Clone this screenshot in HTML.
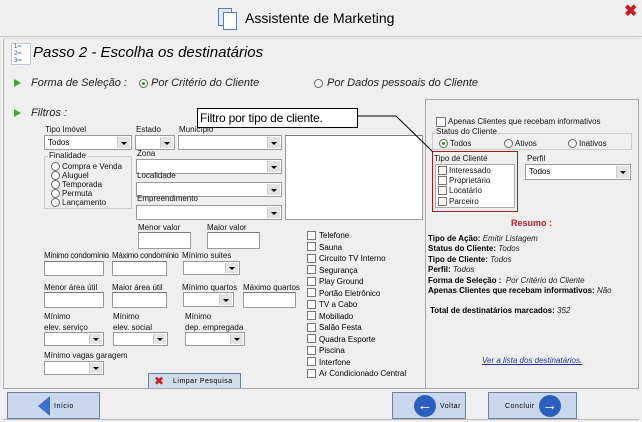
<!DOCTYPE html>
<html><head><meta charset="utf-8"><style>
*{box-sizing:border-box;margin:0;padding:0}
body{width:642px;height:422px;background:#efefef;font-family:"Liberation Sans",sans-serif;position:relative;overflow:hidden;color:#000}
.a{position:absolute;white-space:nowrap}
.l{position:absolute;font-size:8px;white-space:nowrap;color:#111}
.in{position:absolute;background:#fff;border:1px solid #9a9a9a;border-top-color:#7a7a7a}
.sel{position:absolute;background:#fff;border:1px solid #9a9a9a;font-size:8px;padding:2px 3px}
.sel:after{content:"";position:absolute;right:1px;top:1px;bottom:1px;width:12px;background:#e4e4e4;border-left:1px solid #ccc}
.sel b{position:absolute;right:4px;top:50%;margin-top:-1px;border:3px solid transparent;border-top:3px solid #000;z-index:2}
.cb{position:absolute;width:9px;height:9px;border:1px solid #777;background:#fff}
.rd{position:absolute;width:9px;height:9px;border:1px solid #666;border-radius:50%;background:#fff}
.btn{position:absolute;background:#c9d8ec;border:1px solid #6d7f99;font-size:7px;letter-spacing:0.5px;white-space:nowrap}
.arrow{position:absolute;width:0;height:0;border-left:7px solid #3faa2f;border-top:4px solid transparent;border-bottom:4px solid transparent}
.r{font-size:8px;position:absolute;white-space:nowrap}
.r b{font-weight:bold}
.r i{font-style:italic;color:#222}
</style></head><body>
<div class="a" style="left:218px;top:8px;width:14px;height:18px;border:1px solid #5a7ab0;background:#dfe9f7"></div>
<div class="a" style="left:223px;top:12px;width:14px;height:18px;border:1px solid #5a7ab0;background:#fff"></div>
<div class="a" style="left:245px;top:10px;font-size:14px">Assistente de Marketing</div>
<div class="a" style="left:624px;top:1px;font-size:16px;font-weight:bold;color:#c02020">✖</div>
<div class="a" style="left:0;top:36px;width:642px;height:1px;background:#c8c8c8"></div>
<div class="a" style="left:3px;top:38px;width:1px;height:350px;background:#bbb"></div>
<div class="a" style="left:3px;top:38px;width:636px;height:1px;background:#ddd"></div>
<div class="a" style="left:11px;top:43px;width:20px;height:22px;font-size:6px;line-height:7px;color:#2050a0;border:1px solid #c0c8d8;background:#fff;padding-left:2px">1═<br>2═<br>3═</div>
<div class="a" style="left:33px;top:44px;font-size:15px;font-style:italic">Passo 2 - Escolha os destinatários</div>
<div class="arrow" style="left:14px;top:79px"></div>
<div class="a" style="left:31px;top:77px;font-size:11px;font-style:italic;color:#222">Forma de Seleção :</div>
<div class="rd" style="left:139px;top:79px"></div><div class="a" style="left:142px;top:82px;width:3px;height:3px;border-radius:50%;background:#3a8a2a"></div>
<div class="a" style="left:151px;top:77px;font-size:11px;font-style:italic;color:#222">Por Critério do Cliente</div>
<div class="rd" style="left:314px;top:79px"></div>
<div class="a" style="left:327px;top:77px;font-size:11px;font-style:italic;color:#222">Por Dados pessoais do Cliente</div>
<div class="arrow" style="left:14px;top:109px"></div>
<div class="a" style="left:31px;top:107px;font-size:11px;font-style:italic;color:#222">Filtros :</div>
<div class="l" style="left:45px;top:125px">Tipo Imóvel</div>
<div class="sel" style="left:44px;top:135px;width:88px;height:15px">Todos<b></b></div>
<div class="l" style="left:136px;top:125px">Estado</div>
<div class="sel" style="left:135px;top:135px;width:40px;height:15px"><b></b></div>
<div class="l" style="left:179px;top:125px">Município</div>
<div class="sel" style="left:178px;top:135px;width:104px;height:15px"><b></b></div>
<div class="in" style="left:285px;top:135px;width:138px;height:85px"></div>
<div class="a" style="left:44px;top:156px;width:88px;height:53px;border:1px solid #ccc"></div>
<div class="l" style="left:48px;top:151px;background:#efefef;padding:0 1px">Finalidade</div>
<div class="rd" style="left:51px;top:162px"></div><div class="l" style="left:62px;top:162px">Compra e Venda</div>
<div class="rd" style="left:51px;top:171px"></div><div class="l" style="left:62px;top:171px">Aluguel</div>
<div class="rd" style="left:51px;top:180px"></div><div class="l" style="left:62px;top:180px">Temporada</div>
<div class="rd" style="left:51px;top:189px"></div><div class="l" style="left:62px;top:189px">Permuta</div>
<div class="rd" style="left:51px;top:198px"></div><div class="l" style="left:62px;top:198px">Lançamento</div>
<div class="l" style="left:137px;top:149px">Zona</div>
<div class="sel" style="left:136px;top:159px;width:146px;height:15px"><b></b></div>
<div class="l" style="left:137px;top:171px">Localidade</div>
<div class="sel" style="left:136px;top:182px;width:146px;height:15px"><b></b></div>
<div class="l" style="left:137px;top:194px">Empreendimento</div>
<div class="sel" style="left:136px;top:205px;width:146px;height:15px"><b></b></div>
<div class="l" style="left:138px;top:223px">Menor valor</div><div class="in" style="left:138px;top:232px;width:53px;height:17px"></div>
<div class="l" style="left:207px;top:223px">Maior valor</div><div class="in" style="left:207px;top:232px;width:53px;height:17px"></div>
<div class="l" style="left:44px;top:251px;letter-spacing:-0.3px">Mínimo condomínio</div><div class="in" style="left:44px;top:261px;width:60px;height:15px"></div>
<div class="l" style="left:112px;top:251px;letter-spacing:-0.3px">Máximo condomínio</div><div class="in" style="left:112px;top:261px;width:55px;height:15px"></div>
<div class="l" style="left:182px;top:251px">Mínimo suites</div><div class="sel" style="left:183px;top:261px;width:57px;height:14px"><b></b></div>
<div class="l" style="left:44px;top:283px">Menor área útil</div><div class="in" style="left:44px;top:292px;width:60px;height:16px"></div>
<div class="l" style="left:112px;top:283px">Maior área útil</div><div class="in" style="left:112px;top:292px;width:55px;height:16px"></div>
<div class="l" style="left:182px;top:283px">Mínimo quartos</div><div class="sel" style="left:183px;top:292px;width:51px;height:15px"><b></b></div>
<div class="l" style="left:243px;top:283px">Máximo quartos</div><div class="in" style="left:243px;top:292px;width:53px;height:16px"></div>
<div class="l" style="left:44px;top:311px;line-height:11px">Mínimo<br>elev. serviço</div><div class="sel" style="left:44px;top:332px;width:60px;height:14px"><b></b></div>
<div class="l" style="left:113px;top:311px;line-height:11px">Mínimo<br>elev. social</div><div class="sel" style="left:113px;top:332px;width:55px;height:14px"><b></b></div>
<div class="l" style="left:185px;top:311px;line-height:11px">Mínimo<br>dep. empregada</div><div class="sel" style="left:185px;top:332px;width:60px;height:14px"><b></b></div>
<div class="l" style="left:44px;top:351px">Mínimo vagas garagem</div><div class="sel" style="left:44px;top:361px;width:60px;height:14px"><b></b></div>
<div class="btn" style="left:148px;top:373px;width:93px;height:16px;background:#d2ddea"><span style="position:absolute;left:5px;top:0px;color:#d02020;font-size:12px">✖</span><span style="position:absolute;left:24px;top:4px">Limpar Pesquisa</span></div>
<div style="position:absolute;left:307px;top:230px;font-size:8px;line-height:11.5px">
<div style="position:relative;padding-left:12px">Telefone<br>Sauna<br>Circuito TV Interno<br>Segurança<br>Play Ground<br>Portão Eletrônico<br>TV a Cabo<br>Mobiliado<br>Salão Festa<br>Quadra Esporte<br>Piscina<br>Interfone<br>Ar Condicionado Central</div>
</div>
<div class="cb" style="left:307px;top:231px"></div><div class="cb" style="left:307px;top:242px"></div><div class="cb" style="left:307px;top:254px"></div><div class="cb" style="left:307px;top:265px"></div><div class="cb" style="left:307px;top:277px"></div><div class="cb" style="left:307px;top:288px"></div><div class="cb" style="left:307px;top:300px"></div><div class="cb" style="left:307px;top:311px"></div><div class="cb" style="left:307px;top:323px"></div><div class="cb" style="left:307px;top:334px"></div><div class="cb" style="left:307px;top:346px"></div><div class="cb" style="left:307px;top:357px"></div><div class="cb" style="left:307px;top:369px"></div>
<div class="a" style="left:425px;top:99px;width:214px;height:290px;border:1px solid #aaa;border-bottom:none"></div>
<div class="cb" style="left:436px;top:117px;width:10px;height:10px"></div>
<div class="l" style="left:448px;top:117px">Apenas Clientes que recebam informativos</div>
<div class="a" style="left:432px;top:133px;width:200px;height:17px;border:1px solid #ccc"></div>
<div class="l" style="left:436px;top:127px;background:#efefef">Status do Cliente</div>
<div class="rd" style="left:439px;top:139px"></div><div class="a" style="left:442px;top:142px;width:3px;height:3px;border-radius:50%;background:#3a8a2a"></div><div class="l" style="left:450px;top:139px">Todos</div>
<div class="rd" style="left:504px;top:139px"></div><div class="l" style="left:515px;top:139px">Ativos</div>
<div class="rd" style="left:568px;top:139px"></div><div class="l" style="left:579px;top:139px">Inativos</div>
<div class="a" style="left:432px;top:151px;width:86px;height:61px;border:1px solid #a02020"></div>
<div class="l" style="left:434px;top:154px">Tipo de Cliente</div>
<div class="in" style="left:435px;top:164px;width:80px;height:44px;border-color:#aaa"></div>
<div class="cb" style="left:438px;top:166px"></div><div class="l" style="left:449px;top:166px">Interessado</div>
<div class="cb" style="left:438px;top:176px"></div><div class="l" style="left:449px;top:176px">Proprietário</div>
<div class="cb" style="left:438px;top:186px"></div><div class="l" style="left:449px;top:186px">Locatário</div>
<div class="cb" style="left:438px;top:197px"></div><div class="l" style="left:449px;top:197px">Parceiro</div>
<div class="l" style="left:527px;top:154px">Perfil</div>
<div class="sel" style="left:525px;top:164px;width:106px;height:16px">Todos<b></b></div>
<div class="a" style="left:511px;top:218px;font-size:9px;font-weight:bold;color:#c02020">Resumo :</div>
<div class="r" style="left:428px;top:234px"><b>Tipo de Ação:</b> <i>Emitir Listagem</i></div>
<div class="r" style="left:428px;top:244px"><b>Status do Cliente:</b> <i>Todos</i></div>
<div class="r" style="left:428px;top:255px"><b>Tipo de Cliente:</b> <i>Todos</i></div>
<div class="r" style="left:428px;top:265px"><b>Perfil:</b> <i>Todos</i></div>
<div class="r" style="left:428px;top:276px"><b>Forma de Seleção :</b> &nbsp;<i>Por Critério do Cliente</i></div>
<div class="r" style="left:428px;top:286px"><b>Apenas Clientes que recebam informativos:</b> <i>Não</i></div>
<div class="r" style="left:430px;top:306px"><b>Total de destinatários marcados:</b> <i>352</i></div>
<div class="r" style="left:482px;top:356px;color:#2030a0;text-decoration:underline"><i style="color:#2030a0">Ver a lista dos destinatários.</i></div>
<div class="a" style="left:197px;top:108px;width:161px;height:20px;background:#fff;border:1px solid #000;font-size:12px;padding:2px 2px;letter-spacing:-0.2px">Filtro por tipo de cliente.</div>
<svg class="a" style="left:0;top:0" width="642" height="422"><polyline points="358,116 396,116 433,152" fill="none" stroke="#000" stroke-width="1"/></svg>
<div class="a" style="left:3px;top:388px;width:636px;height:1px;background:#aaa"></div>
<div class="a" style="left:3px;top:419px;width:636px;height:1px;background:#bbb"></div>
<div class="btn" style="left:7px;top:392px;width:93px;height:27px"><span style="position:absolute;left:30px;top:3px;border-right:12px solid #3a70d0;border-top:10px solid transparent;border-bottom:10px solid transparent"></span><span style="position:absolute;left:46px;top:10px">Início</span></div>
<div class="btn" style="left:392px;top:392px;width:74px;height:27px"><span style="position:absolute;left:21px;top:2px;width:22px;height:22px;border-radius:50%;background:#2a5fc0;color:#fff;font-size:15px;font-weight:bold;text-align:center;line-height:21px">←</span><span style="position:absolute;left:47px;top:10px">Voltar</span></div>
<div class="btn" style="left:488px;top:392px;width:89px;height:27px"><span style="position:absolute;left:16px;top:10px">Concluir</span><span style="position:absolute;left:50px;top:2px;width:22px;height:22px;border-radius:50%;background:#2a5fc0;color:#fff;font-size:15px;font-weight:bold;text-align:center;line-height:21px">→</span></div>
</body></html>
